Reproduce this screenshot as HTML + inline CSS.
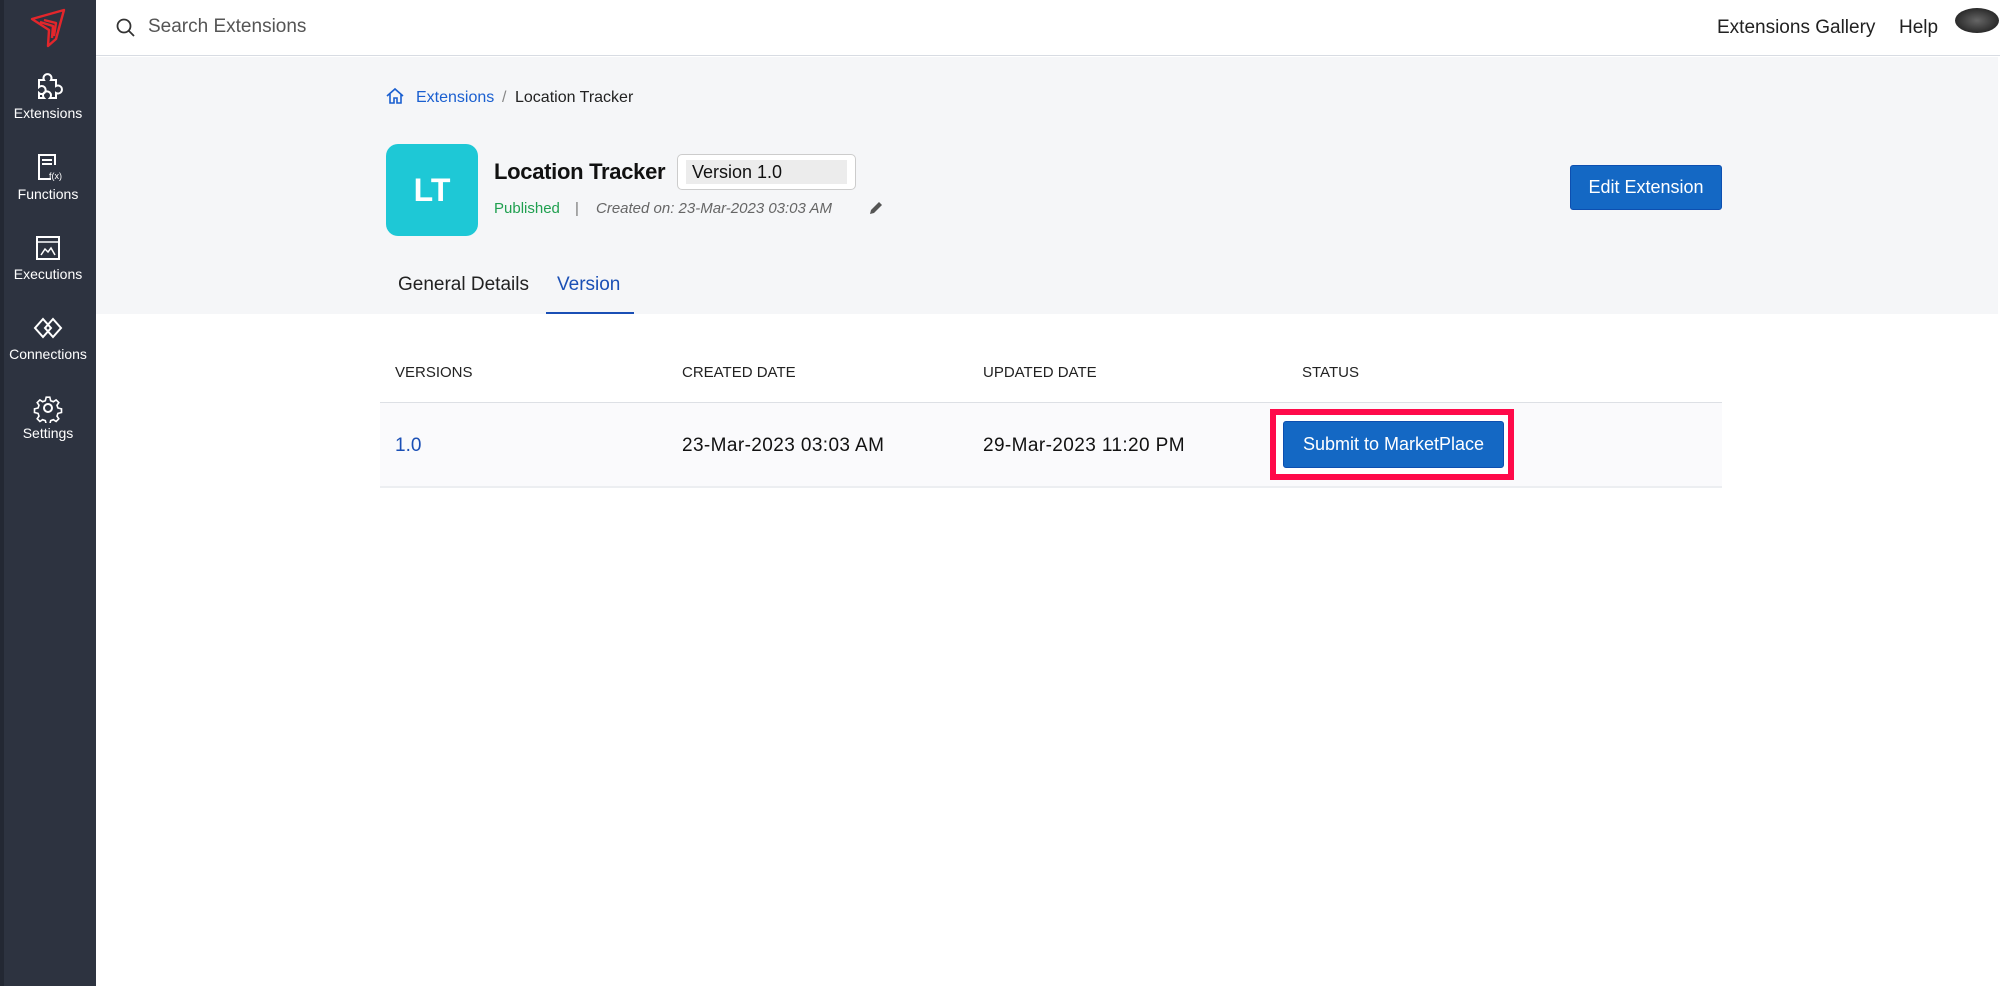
<!DOCTYPE html>
<html><head><meta charset="utf-8"><style>
*{margin:0;padding:0;box-sizing:border-box}
body{width:2000px;height:986px;overflow:hidden;background:#fff;font-family:"Liberation Sans",sans-serif;position:relative;color:#222}
.a{position:absolute;white-space:nowrap}
#side{position:absolute;left:0;top:0;width:96px;height:986px;background:#2d3340;border-left:4px solid #232833}
.lbl{position:absolute;width:96px;left:-4px;text-align:center;color:#fff;font-size:14px}
.ic{position:absolute;left:28px}
</style></head><body>
<div id="side">
<svg class="ic" style="left:22px;top:6px" width="44" height="44" viewBox="0 0 44 44"><path d="M6 13 L38 4 L30 33 L22 40 L23 24 Z M14 16 L27 20 L26 32 M18 14 L30 17 L28 30" fill="none" stroke="#e3262b" stroke-width="2.4" stroke-linejoin="round"/></svg>
<svg class="ic" style="top:72px" width="32" height="30" viewBox="0 0 32 30"><path d="M7 8h5a4 4 0 1 1 7 0h5v6a4 4 0 1 1 0 7v5h-6a4 4 0 1 0-6 0H7v-5a4 4 0 1 0 0-6z" fill="none" stroke="#fff" stroke-width="2"/></svg>
<div class="lbl" style="top:105px">Extensions</div>
<svg class="ic" style="top:152px" width="32" height="30" viewBox="0 0 32 30"><path d="M19 27H7V3h16v10M10 8h10M10 12h10" fill="none" stroke="#fff" stroke-width="2"/><text x="17" y="27" font-size="9" fill="#fff" font-family="Liberation Sans">f(x)</text></svg>
<div class="lbl" style="top:186px">Functions</div>
<svg class="ic" style="top:234px" width="32" height="28" viewBox="0 0 32 28"><rect x="5" y="3" width="22" height="22" fill="none" stroke="#fff" stroke-width="2"/><path d="M5 8h22M9 21l4-6 3 3 3-4 4 7" fill="none" stroke="#fff" stroke-width="1.5"/></svg>
<div class="lbl" style="top:266px">Executions</div>
<svg class="ic" style="top:316px" width="32" height="24" viewBox="0 0 32 24"><path d="M11 3l8 9-8 9-8-9zM21 3l8 9-8 9-8-9z" fill="none" stroke="#fff" stroke-width="2"/></svg>
<div class="lbl" style="top:346px">Connections</div>
<svg class="ic" style="top:393px" width="32" height="30" viewBox="0 0 32 30"><circle cx="16" cy="15" r="4" fill="none" stroke="#fff" stroke-width="2"/><path d="M14 3h4l1 4 3 1 3-2 3 3-2 3 1 3 4 1v4l-4 1-1 3 2 3-3 3-3-2-3 1-1 4h-4l-1-4-3-1-3 2-3-3 2-3-1-3-4-1v-4l4-1 1-3-2-3 3-3 3 2 3-1z" fill="none" stroke="#fff" stroke-width="1.8" transform="translate(16 15) scale(.9) translate(-16 -15)"/></svg>
<div class="lbl" style="top:425px">Settings</div>
</div>
<div class="a" style="left:96px;top:0;width:1904px;height:56px;background:#fff;border-bottom:1px solid #d8dce3"></div>
<svg class="a" style="left:115px;top:17px" width="22" height="22" viewBox="0 0 22 22"><circle cx="9" cy="9" r="6.5" fill="none" stroke="#333" stroke-width="1.8"/><path d="M14 14l5 5" stroke="#333" stroke-width="1.8"/></svg>
<div class="a" style="left:148px;top:16px;font-size:19px;color:#555">Search Extensions</div>
<div class="a" style="left:1717px;top:17px;font-size:19px;color:#222">Extensions Gallery</div>
<div class="a" style="left:1899px;top:17px;font-size:19px;color:#222">Help</div>
<div class="a" style="left:1955px;top:8px;width:44px;height:25px;border-radius:50%;background:radial-gradient(#666,#111)"></div>
<div class="a" style="left:96px;top:57px;width:1902px;height:257px;background:#f5f6f8"></div>
<svg class="a" style="left:385px;top:86px" width="20" height="20" viewBox="0 0 20 20"><path d="M2 10L10 3l8 7M5 8v9h4v-5h3v5h4V8" fill="none" stroke="#1a5fd0" stroke-width="1.6"/></svg>
<div class="a" style="left:416px;top:89px;font-size:16px;color:#1a5fd0">Extensions</div>
<div class="a" style="left:502px;top:89px;font-size:16px;color:#888">/</div>
<div class="a" style="left:515px;top:89px;font-size:16px;color:#222">Location Tracker</div>
<div class="a" style="left:386px;top:144px;width:92px;height:92px;border-radius:12px;background:#1ec8d6;color:#fff;font-size:32px;font-weight:bold;text-align:center;line-height:92px">LT</div>
<div class="a" style="left:494px;top:159px;font-size:22px;font-weight:bold;color:#111;letter-spacing:-0.3px">Location Tracker</div>
<div class="a" style="left:677px;top:154px;width:179px;height:36px;border:1px solid #ccc;border-radius:5px;background:#fff"><div style="margin:5px 8px;height:24px;background:#ececec;font-size:18px;line-height:24px;padding-left:6px;color:#111">Version 1.0</div></div>
<div class="a" style="left:494px;top:200px;font-size:15px;color:#20a050">Published</div>
<div class="a" style="left:575px;top:200px;font-size:15px;color:#777">|</div>
<div class="a" style="left:596px;top:200px;font-size:15px;color:#666;font-style:italic">Created on: 23-Mar-2023 03:03 AM</div>
<svg class="a" style="left:867px;top:199px" width="18" height="18" viewBox="0 0 18 18"><path d="M3 15l1-4 8-8 3 3-8 8z" fill="#555"/></svg>
<div class="a" style="left:1570px;top:165px;width:152px;height:45px;background:#1468c4;border:1px solid #0d4fb0;border-radius:3px;color:#fff;font-size:18px;text-align:center;line-height:43px">Edit Extension</div>
<div class="a" style="left:398px;top:274px;font-size:19px;color:#222">General Details</div>
<div class="a" style="left:557px;top:274px;font-size:19px;color:#1a4fb5">Version</div>
<div class="a" style="left:546px;top:312px;width:88px;height:2px;background:#1a4fb5"></div>
<div class="a" style="left:395px;top:364px;font-size:15px;color:#222">VERSIONS</div>
<div class="a" style="left:682px;top:364px;font-size:15px;color:#222">CREATED DATE</div>
<div class="a" style="left:983px;top:364px;font-size:15px;color:#222">UPDATED DATE</div>
<div class="a" style="left:1302px;top:364px;font-size:15px;color:#222">STATUS</div>
<div class="a" style="left:380px;top:402px;width:1342px;height:86px;background:#fafafc;border-top:1px solid #dde0e5;border-bottom:2px solid #eceef1"></div>
<div class="a" style="left:395px;top:435px;font-size:19px;color:#1a4fb5">1.0</div>
<div class="a" style="left:682px;top:435px;font-size:19px;color:#111;letter-spacing:0.4px">23-Mar-2023 03:03 AM</div>
<div class="a" style="left:983px;top:435px;font-size:19px;color:#111;letter-spacing:0.4px">29-Mar-2023 11:20 PM</div>
<div class="a" style="left:1270px;top:409px;width:244px;height:71px;border:6px solid #ff0a4a;background:#fff"></div>
<div class="a" style="left:1283px;top:421px;width:221px;height:47px;background:#1468c4;border:1px solid #0d4fb0;border-radius:3px;color:#fff;font-size:18px;text-align:center;line-height:45px">Submit to MarketPlace</div>
</body></html>
